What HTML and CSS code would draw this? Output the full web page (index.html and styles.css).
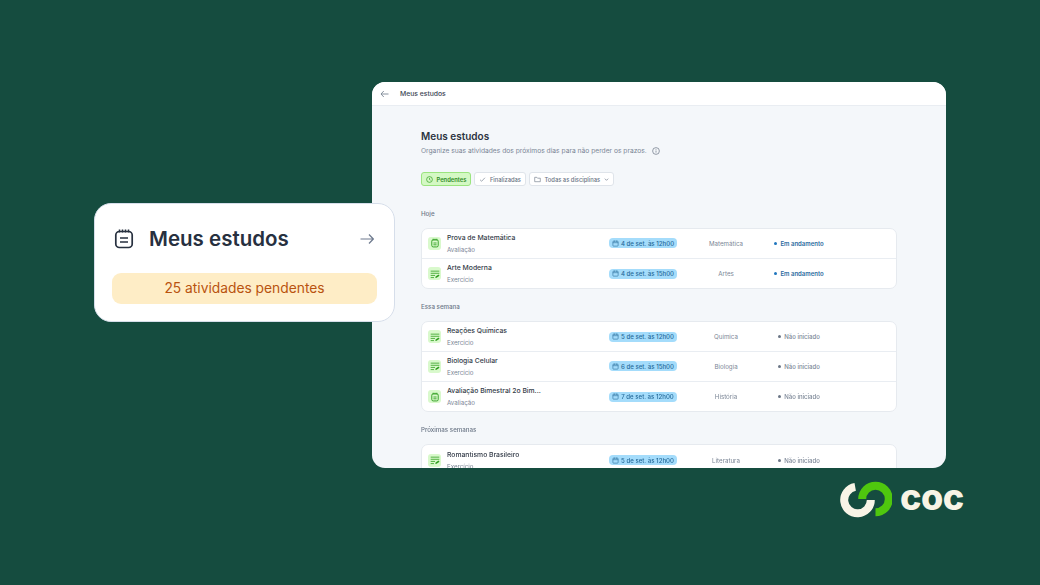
FILE: index.html
```html
<!DOCTYPE html>
<html lang="pt-BR">
<head>
    <meta charset="UTF-8">
    <title>Meus estudos</title>
    <link rel="stylesheet" href="styles.css">
</head>
<body>
    <svg width="0" height="0" class="defs">
        <symbol id="i-cal" viewBox="0 0 12 12">
            <rect x="1.5" y="2" width="9" height="8.5" rx="1.2" fill="none" stroke="currentColor" stroke-width="1"/>
            <path d="M1.5 4.600h9M4 1v2M8 1v2" fill="none" stroke="currentColor" stroke-width="1"/>
        </symbol>
        <symbol id="i-exam" viewBox="0 0 14 14">
            <rect x="2.500" y="2.500" width="9" height="10" rx="2" fill="none" stroke="currentColor" stroke-width="1.300"/>
            <path d="M4.500 1v2.500M7 1v2.500M9.500 1v2.500M4.800 7h4.400M4.800 9.500h4.400" fill="none" stroke="currentColor" stroke-width="1.200"/>
        </symbol>
        <symbol id="i-task" viewBox="0 0 14 14">
            <path d="M1.500 3h11M1.500 6h11M1.500 9h5M1.500 12h3.500" fill="none" stroke="currentColor" stroke-width="1.100" stroke-linecap="round"/>
            <path d="M7.500 12.500l.4-2 4-2.800 1.400 1.600-4 2.800z" fill="currentColor"/>
        </symbol>
    </svg>

    <main class="window">
        <header class="topbar">
            <svg class="back" width="9" height="8" viewBox="0 0 9 8"><path d="M8.500 4H1M3.800 1L1 4l2.800 3" fill="none" stroke="#7b8794" stroke-width="0.900"/></svg>
            <span>Meus estudos</span>
        </header>
        <div class="content">
            <h1>Meus estudos</h1>
            <p class="subtitle">Organize suas atividades dos próximos dias para não perder os prazos.
                <svg width="8" height="8" viewBox="0 0 9 9"><circle cx="4.500" cy="4.500" r="3.800" fill="none" stroke="#6b7686" stroke-width="0.800"/><path d="M4.500 4v2.300M4.500 2.500v.8" stroke="#6b7686" stroke-width="0.800"/></svg>
            </p>
            <div class="filters">
                <span class="chip chip-active">
                    <svg width="7" height="7" viewBox="0 0 8 8"><circle cx="4" cy="4" r="3.300" fill="none" stroke="#2f9e1f" stroke-width="0.800"/><path d="M4 2.200V4l1.200.8" fill="none" stroke="#2f9e1f" stroke-width="0.800"/></svg>
                    Pendentes
                </span>
                <span class="chip">
                    <svg width="7" height="7" viewBox="0 0 8 8"><path d="M1.200 4.300l1.800 1.700 3.800-4" fill="none" stroke="#7b8794" stroke-width="0.800"/></svg>
                    Finalizadas
                </span>
                <span class="chip">
                    <svg width="7" height="7" viewBox="0 0 8 8"><path d="M.8 1.500h2.400l.8 1h3.200v4H.8z" fill="none" stroke="#6b7686" stroke-width="0.700"/></svg>
                    Todas as disciplinas
                    <svg width="5" height="5" viewBox="0 0 6 6"><path d="M1 2l2 2 2-2" fill="none" stroke="#6b7686" stroke-width="0.800"/></svg>
                </span>
            </div>

            <h2>Hoje</h2>
            <section class="list">
                <div class="row">
                    <span class="type"><svg width="10" height="10"><use href="#i-exam"/></svg></span>
                    <div class="info"><b>Prova de Matemática</b><small>Avaliação</small></div>
                    <div class="date-col"><span class="date"><svg width="7" height="7"><use href="#i-cal"/></svg>4 de set. às 12h00</span></div>
                    <span class="subject">Matemática</span>
                    <div class="status-col"><span class="status status-on">Em andamento</span></div>
                </div>
                <div class="row">
                    <span class="type"><svg width="10" height="10"><use href="#i-task"/></svg></span>
                    <div class="info"><b>Arte Moderna</b><small>Exercício</small></div>
                    <div class="date-col"><span class="date"><svg width="7" height="7"><use href="#i-cal"/></svg>4 de set. às 15h00</span></div>
                    <span class="subject">Artes</span>
                    <div class="status-col"><span class="status status-on">Em andamento</span></div>
                </div>
            </section>

            <h2>Essa semana</h2>
            <section class="list">
                <div class="row">
                    <span class="type"><svg width="10" height="10"><use href="#i-task"/></svg></span>
                    <div class="info"><b>Reações Químicas</b><small>Exercício</small></div>
                    <div class="date-col"><span class="date"><svg width="7" height="7"><use href="#i-cal"/></svg>5 de set. às 12h00</span></div>
                    <span class="subject">Química</span>
                    <div class="status-col"><span class="status">Não iniciado</span></div>
                </div>
                <div class="row">
                    <span class="type"><svg width="10" height="10"><use href="#i-task"/></svg></span>
                    <div class="info"><b>Biologia Celular</b><small>Exercício</small></div>
                    <div class="date-col"><span class="date"><svg width="7" height="7"><use href="#i-cal"/></svg>6 de set. às 15h00</span></div>
                    <span class="subject">Biologia</span>
                    <div class="status-col"><span class="status">Não iniciado</span></div>
                </div>
                <div class="row">
                    <span class="type"><svg width="10" height="10"><use href="#i-exam"/></svg></span>
                    <div class="info"><b>Avaliação Bimestral 2o Bim...</b><small>Avaliação</small></div>
                    <div class="date-col"><span class="date"><svg width="7" height="7"><use href="#i-cal"/></svg>7 de set. às 12h00</span></div>
                    <span class="subject">História</span>
                    <div class="status-col"><span class="status">Não iniciado</span></div>
                </div>
            </section>

            <h2>Próximas semanas</h2>
            <section class="list">
                <div class="row">
                    <span class="type"><svg width="10" height="10"><use href="#i-task"/></svg></span>
                    <div class="info"><b>Romantismo Brasileiro</b><small>Exercício</small></div>
                    <div class="date-col"><span class="date"><svg width="7" height="7"><use href="#i-cal"/></svg>5 de set. às 12h00</span></div>
                    <span class="subject">Literatura</span>
                    <div class="status-col"><span class="status">Não iniciado</span></div>
                </div>
            </section>
        </div>
    </main>

    <aside class="card">
        <div class="card-head">
            <svg width="22" height="22" viewBox="0 0 22 22"><rect x="2.800" y="3.500" width="16.400" height="16" rx="3.600" fill="none" stroke="#27303f" stroke-width="1.700"/><path d="M6.500 1.500v3M9.500 1.500v3M12.500 1.500v3M15.500 1.500v3M7 10h8M7 14h8" fill="none" stroke="#27303f" stroke-width="1.500"/></svg>
            <span class="card-title">Meus estudos</span>
            <svg class="card-arrow" width="14" height="10" viewBox="0 0 14 10"><path d="M.5 5h12.800M9 .5L13.300 5 9 9.500" fill="none" stroke="#6f7b8f" stroke-width="1.200"/></svg>
        </div>
        <div class="pending">25 atividades pendentes</div>
    </aside>

    <div class="logo">
        <svg width="54" height="40" viewBox="0 0 54 40">
            <path d="M17.200 6.900A13.300 13.300 0 1 0 32.800 20" fill="none" stroke="#f8f4e6" stroke-width="8"/>
            <path d="M24.200 19A13.300 13.300 0 1 1 37.500 32.300" fill="none" stroke="#4fc70e" stroke-width="8"/>
        </svg>
        <span class="logo-text">coc</span>
    </div>
</body>
</html>
```

FILE: styles.css
```css
* {
    box-sizing: border-box;
}
html, body {
    height: 100%;
}
body {
    margin: 0;
    background-color: #154c3f;
    font-family: Inter, "Liberation Sans", sans-serif;
    overflow: hidden;
}
.defs {
    display: block;
}
.window {
    position: absolute;
    left: 372px;
    top: 82px;
    width: 574px;
    height: 386px;
    background-color: #f4f7fa;
    border-radius: 13px;
    overflow: hidden;
    filter: blur(0.3px);
}
.topbar {
    display: flex;
    align-items: center;
    gap: 11px;
    height: 24px;
    padding-left: 8px;
    background-color: #ffffff;
    border-bottom: 1px solid #e9edf2;
    font-size: 6.800px;
    font-weight: 500;
    color: #3c4554;
}
.content {
    padding: 24px 49px 0 49px;
}
h1 {
    margin: 0;
    font-size: 10px;
    line-height: 13px;
    font-weight: 600;
    color: #2b3340;
}
.subtitle {
    display: flex;
    align-items: center;
    gap: 5px;
    margin: 2.500px 0 0;
    font-size: 6.700px;
    line-height: 11px;
    color: #7b8696;
}
.filters {
    display: flex;
    gap: 3px;
    margin-top: 15.500px;
    margin-bottom: 23px;
}
.chip {
    display: flex;
    align-items: center;
    gap: 3.500px;
    height: 14px;
    padding: 0 4px;
    background-color: #ffffff;
    border: 1px solid #dfe4ea;
    border-radius: 3px;
    font-size: 5.800px;
    font-weight: 500;
    color: #6b7686;
}
.chip-active {
    background-color: #d4f8c4;
    border-color: #9be47f;
    color: #2f8a1f;
    font-weight: 600;
}
h2 {
    margin: 13px 0 0;
    font-size: 6.200px;
    line-height: 10px;
    font-weight: 500;
    color: #6b7686;
}
.filters + h2 {
    margin-top: 0;
}
.list {
    margin-top: 9px;
    background-color: #ffffff;
    border: 1px solid #e6eaef;
    border-radius: 7px;
}
.row {
    display: grid;
    grid-template-columns: 25px 153px 86px 80px 66px;
    align-items: center;
    height: 29.700px;
    border-bottom: 1px solid #e9edf2;
}
.row:last-child {
    border-bottom: none;
}
.type {
    display: flex;
    align-items: center;
    justify-content: center;
    width: 13px;
    height: 13px;
    margin-left: 6px;
    background-color: #d9f9cc;
    border-radius: 3px;
    color: #2f9e1f;
}
.info b {
    display: block;
    font-size: 6.800px;
    line-height: 9px;
    font-weight: 500;
    color: #333b48;
}
.info small {
    display: block;
    margin-top: 4px;
    font-size: 6.200px;
    line-height: 8px;
    color: #7b8696;
}
.date-col, .status-col {
    display: flex;
    justify-content: center;
}
.date {
    display: flex;
    align-items: center;
    gap: 2px;
    height: 10px;
    padding: 0 3px;
    background-color: #a4dcfb;
    border-radius: 4px;
    font-size: 6.100px;
    font-weight: 500;
    color: #266a9a;
    white-space: nowrap;
}
.subject {
    font-size: 6.200px;
    text-align: center;
    color: #7b8696;
}
.status {
    display: flex;
    align-items: center;
    gap: 3px;
    font-size: 6px;
    font-weight: 500;
    color: #7b8696;
    white-space: nowrap;
}
.status::before {
    content: "";
    width: 3px;
    height: 3px;
    border-radius: 50%;
    background-color: #6b7686;
}
.status-on {
    color: #2a6a9e;
    font-weight: 600;
}
.status-on::before {
    background-color: #1f75bd;
}
.card {
    position: absolute;
    left: 94px;
    top: 203px;
    width: 301px;
    height: 119px;
    padding: 0 17px;
    background-color: #ffffff;
    border: 1px solid #d6deea;
    border-radius: 17px;
}
.card-head {
    display: flex;
    align-items: center;
    height: 69px;
    padding: 0 1px;
}
.card-title {
    margin-left: 14px;
    font-size: 20.500px;
    font-weight: 600;
    color: #27303f;
}
.card-arrow {
    margin-left: auto;
    margin-right: 2px;
}
.pending {
    height: 31px;
    line-height: 31px;
    background-color: #feedc6;
    border-radius: 9px;
    text-align: center;
    font-size: 13.800px;
    font-weight: 400;
    color: #b9530f;
}
.logo {
    position: absolute;
    left: 838px;
    top: 480px;
    display: flex;
    align-items: center;
    gap: 8px;
}
.logo-text {
    margin-top: -7px;
    font-size: 36px;
    line-height: 38px;
    font-weight: 800;
    letter-spacing: -0.5px;
    color: #f8f4e6;
}
```
